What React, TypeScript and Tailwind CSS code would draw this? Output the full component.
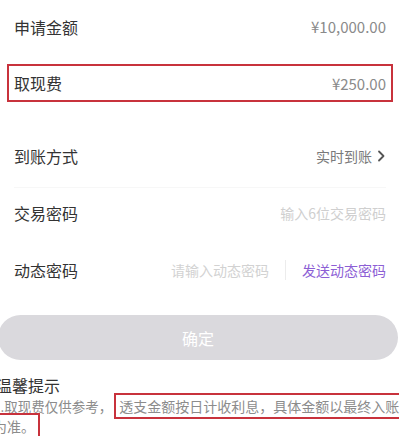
import React from "react";

const font = { fontFamily: '"Noto Sans CJK SC", "Noto Sans", sans-serif' };

function Row({ label, children, className = "" }: { label: string; children: React.ReactNode; className?: string }) {
  return (
    <div className={`flex items-center justify-between ${className}`}>
      <span className="text-[16px] text-[#333333] leading-none">{label}</span>
      <div className="flex items-center">{children}</div>
    </div>
  );
}

export default function App() {
  return (
    <div
      className="w-[400px] h-[436px] overflow-hidden bg-white flex flex-col"
      style={font}
    >
      <Row label="申请金额" className="h-[54px] px-[14px]">
        <span className="text-[15px] text-[#8a8a8a] leading-none">¥10,000.00</span>
      </Row>

      <div className="mt-[11px] mx-[7px] h-[38px] border-2 border-[#c8323c] flex items-center justify-between px-[5px]">
        <span className="text-[16px] text-[#333333] leading-none">取现费</span>
        <span className="text-[15px] text-[#8a8a8a] leading-none">¥250.00</span>
      </div>

      <Row label="到账方式" className="mt-[28px] h-[52px] px-[14px]">
        <span className="text-[14px] text-[#7a7a7a] leading-none">实时到账</span>
        <svg width="9" height="12" viewBox="0 0 9 12" className="ml-[5px]">
          <path d="M2 1.5 L6.5 6 L2 10.5" fill="none" stroke="#555555" strokeWidth="1.8" strokeLinecap="round" strokeLinejoin="round" />
        </svg>
      </Row>

      <div className="mt-[6px] mx-[14px] h-px bg-[#f7f7f7]" />

      <Row label="交易密码" className="h-[50px] px-[14px]">
        <span className="text-[14px] text-[#cfcfcf] leading-none">输入6位交易密码</span>
      </Row>

      <Row label="动态密码" className="mt-[7px] h-[50px] px-[14px]">
        <span className="text-[14px] text-[#d2d2d2] leading-none">请输入动态密码</span>
        <span className="mx-[16px] w-px h-[20px] bg-[#ececec]" />
        <span className="text-[14px] text-[#8d5fd5] leading-none">发送动态密码</span>
      </Row>

      <div className="mt-[21px] ml-[-2px] w-[400px] h-[45px] shrink-0 rounded-full bg-[#dad9dd] flex items-center justify-center">
        <span className="text-[16px] text-white leading-none">确定</span>
      </div>

      <div className="mt-[14px] ml-[-4px] h-[22px] flex items-center">
        <span className="text-[16px] text-[#333333] leading-none">温馨提示</span>
      </div>

      <div className="ml-[-7px] whitespace-nowrap text-[13.5px] leading-[20px] text-[#8c8c8c]">
        1.取现费仅供参考，
        <span className="ml-[2px] text-[14px] border-2 border-[#c8323c] px-[3px] py-[1px] [box-decoration-break:slice]">
          透支金额按日计收利息，具体金额以最终入账
          <br />
          为准。
        </span>
      </div>
    </div>
  );
}
